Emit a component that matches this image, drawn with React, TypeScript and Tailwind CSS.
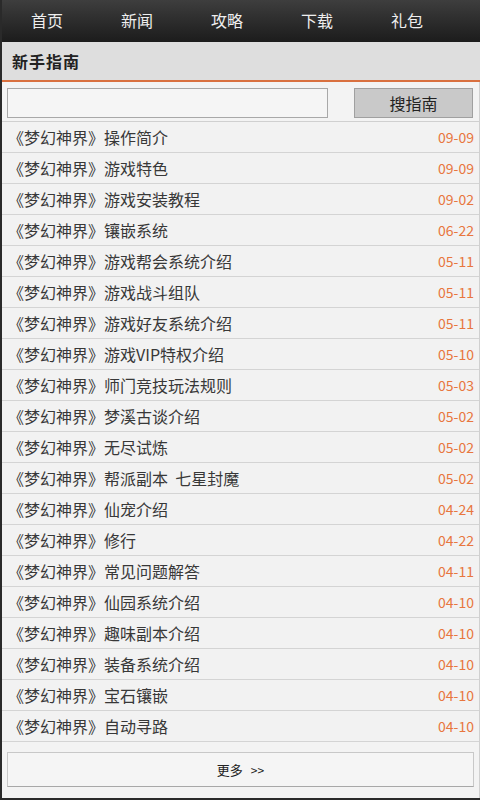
import React from "react";

const items: [string, string][] = [
  ["《梦幻神界》操作简介", "09-09"],
  ["《梦幻神界》游戏特色", "09-09"],
  ["《梦幻神界》游戏安装教程", "09-02"],
  ["《梦幻神界》镶嵌系统", "06-22"],
  ["《梦幻神界》游戏帮会系统介绍", "05-11"],
  ["《梦幻神界》游戏战斗组队", "05-11"],
  ["《梦幻神界》游戏好友系统介绍", "05-11"],
  ["《梦幻神界》游戏VIP特权介绍", "05-10"],
  ["《梦幻神界》师门竞技玩法规则", "05-03"],
  ["《梦幻神界》梦溪古谈介绍", "05-02"],
  ["《梦幻神界》无尽试炼", "05-02"],
  ["《梦幻神界》帮派副本  七星封魔", "05-02"],
  ["《梦幻神界》仙宠介绍", "04-24"],
  ["《梦幻神界》修行", "04-22"],
  ["《梦幻神界》常见问题解答", "04-11"],
  ["《梦幻神界》仙园系统介绍", "04-10"],
  ["《梦幻神界》趣味副本介绍", "04-10"],
  ["《梦幻神界》装备系统介绍", "04-10"],
  ["《梦幻神界》宝石镶嵌", "04-10"],
  ["《梦幻神界》自动寻路", "04-10"],
];

const nav = ["首页", "新闻", "攻略", "下载", "礼包"];

export default function App() {
  return (
    <div
      className="w-[480px] h-[800px] overflow-hidden bg-[#f3f3f3] border-l-2 border-b-2 border-[#2a2a2a] flex flex-col"
      style={{ fontFamily: '"Noto Sans CJK SC", "Noto Sans", sans-serif' }}
    >
      <div className="h-[42px] shrink-0 flex bg-gradient-to-b from-[#3e3e3e] to-[#1c1c1c]">
        {nav.map((n) => (
          <div key={n} className="w-[90px] text-center text-[16px] leading-[40px] text-[#eeeeee]">
            {n}
          </div>
        ))}
      </div>
      <div className="h-[40px] shrink-0 bg-[#dedede] border-b-2 border-[#d9703f] pl-[10px] flex items-center">
        <span className="text-[16px] font-bold text-[#222] tracking-[1px]">新手指南</span>
      </div>
      <div className="shrink-0 flex items-center pl-[5px] pt-[6px] pb-[3px] border-b border-[#d0d0d0] border-r border-r-[#d0d0d0]">
        <div className="w-[321px] h-[30px] border border-[#a8a8a8] bg-[#f5f5f5]" />
        <div className="ml-[26px] w-[119px] h-[30px] border border-[#a0a0a0] bg-[#c9c9c9] flex items-center justify-center text-[16px] text-[#222]">
          搜指南
        </div>
      </div>
      <div className="shrink-0 flex flex-col border-r border-[#d0d0d0]">
        {items.map(([t, d], i) => (
          <div
            key={i}
            className="h-[31px] flex items-center justify-between pl-[6px] pr-[5px] border-b border-[#d4d4d4] bg-[#f2f2f2]"
          >
            <span className="text-[16px] text-[#383838] whitespace-pre">{t}</span>
            <span className="text-[14px] text-[#e8763e]">{d}</span>
          </div>
        ))}
      </div>
      <div className="flex-1 pt-[10px] px-[5px] border-r border-[#d0d0d0]">
        <div className="h-[35px] border border-[#c8c8c8] border-b-[#a8a8a8] bg-[#f5f5f5] flex items-center justify-center gap-[8px] text-[13px] text-[#222]">
          <span>更多</span>
          <span className="text-[12px]">&gt;&gt;</span>
        </div>
      </div>
    </div>
  );
}
